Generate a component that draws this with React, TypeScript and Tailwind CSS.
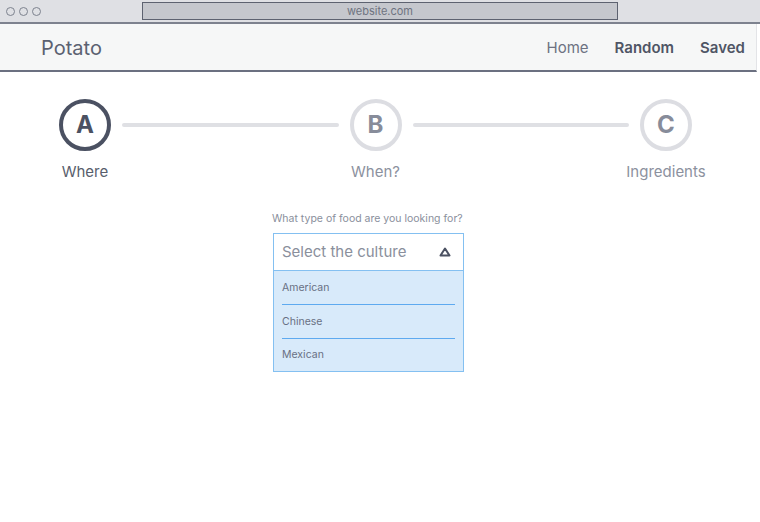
import React from "react";

const steps = [
  { letter: "A", label: "Where", active: true },
  { letter: "B", label: "When?", active: false },
  { letter: "C", label: "Ingredients", active: false },
];

const options = ["American", "Chinese", "Mexican"];

const Step = ({ letter, label, active }: { letter: string; label: string; active: boolean }) => (
  <div className="relative flex w-[52px] flex-col items-center">
    <div
      className={
        active
          ? "flex h-[52px] w-[52px] items-center justify-center rounded-full border-[4px] border-[#4b5162] text-[24px] font-bold text-[#4b5162]"
          : "flex h-[52px] w-[52px] items-center justify-center rounded-full border-[4px] border-[#dcdde2] text-[24px] font-bold text-[#878c9a]"
      }
    >
      {letter}
    </div>
    <p
      className={
        active
          ? "mt-[10px] whitespace-nowrap text-[15px] text-[#585e6c]"
          : "mt-[10px] whitespace-nowrap text-[15px] text-[#8c919e]"
      }
    >
      {label}
    </p>
  </div>
);

export default function App() {
  return (
    <div className="h-[522px] w-[760px] overflow-hidden bg-white font-['Inter','Liberation_Sans',sans-serif]">
      {/* browser chrome */}
      <div className="flex h-[24px] items-center border-b-[2px] border-[#7d828e] bg-[#dfe0e4]">
        <div className="flex gap-[4px] pl-[6px]">
          <span className="h-[9px] w-[9px] rounded-full border border-[#7d828e]" />
          <span className="h-[9px] w-[9px] rounded-full border border-[#7d828e]" />
          <span className="h-[9px] w-[9px] rounded-full border border-[#7d828e]" />
        </div>
        <div className="ml-[101px] flex h-[18px] w-[476px] items-center justify-center border border-[#5d6270] bg-[#c5c7cd] text-[11px] text-[#6e7380]">
          website.com
        </div>
      </div>

      {/* nav */}
      <nav className="mr-[3px] flex h-[48px] items-center border-b-[2px] border-r border-[#6b7080] border-r-[#e3e4e7] bg-[#f6f7f7] pl-[41px] pr-[11px] pt-[2px]">
        <span className="text-[20px] text-[#5b6171]">Potato</span>
        <div className="ml-auto flex items-center gap-[26px] text-[15px]">
          <span className="text-[#6d7282]">Home</span>
          <span className="font-semibold text-[#4f5565]">Random</span>
          <span className="font-semibold text-[#4f5565]">Saved</span>
        </div>
      </nav>

      {/* stepper */}
      <div className="mt-[27px] flex items-start pl-[59px] pr-[68px]">
        <Step {...steps[0]} />
        <div className="mx-[11px] mt-[24px] h-[4px] flex-1 rounded-full bg-[#dfe0e4]" />
        <Step {...steps[1]} />
        <div className="mx-[11px] mt-[24px] h-[4px] flex-1 rounded-full bg-[#dfe0e4]" />
        <Step {...steps[2]} />
      </div>

      {/* select */}
      <div className="mt-[27px] pl-[273px]">
        <div className="w-[191px]">
          <p className="-ml-[1px] whitespace-nowrap text-[10.5px] text-[#8a8f9c]">What type of food are you looking for?</p>
          <div className="mt-[7px] flex h-[38px] items-center border border-[#84c0f1] bg-white pl-[8px] pr-[12px]">
            <span className="text-[15px] text-[#8a8f9c]">Select the culture</span>
            <svg className="ml-auto" width="12" height="10" viewBox="0 0 12 10" fill="none">
              <path d="M6 1.5 L10.5 8.5 H1.5 Z" stroke="#4b5162" strokeWidth="2" strokeLinejoin="round" />
            </svg>
          </div>
          <ul className="border border-t-0 border-[#84c0f1] bg-[#d8eafa] px-[8px]">
            {options.map((o, i) => (
              <li
                key={o}
                className={
                  i < options.length - 1
                    ? "flex h-[34px] items-center border-b border-[#5eaaf0] text-[10.5px] text-[#687083]"
                    : "flex h-[32px] items-center text-[10.5px] text-[#687083]"
                }
              >
                {o}
              </li>
            ))}
          </ul>
        </div>
      </div>
    </div>
  );
}
